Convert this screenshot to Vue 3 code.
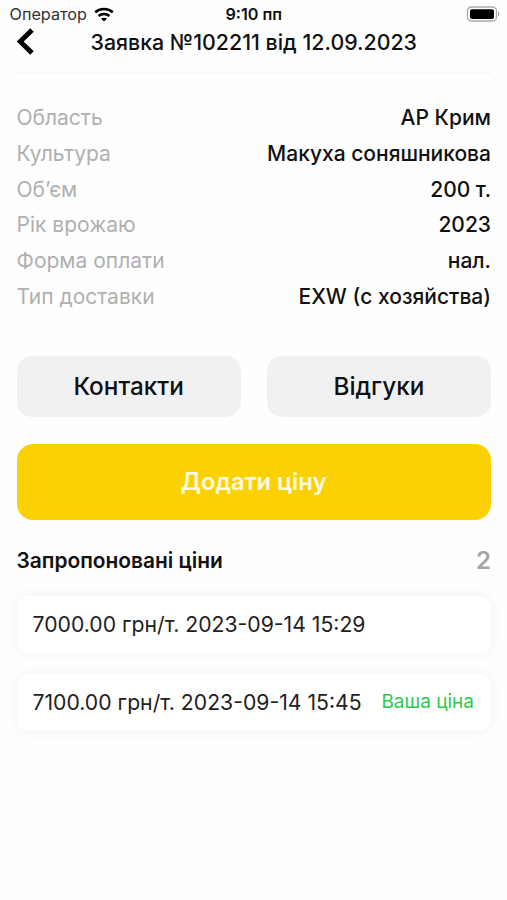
<template>
  <main class="screen">
    <div class="status-bar">
      <div class="carrier">
        <span>Оператор</span>
        <svg class="wifi" viewBox="0 0 20 15" aria-hidden="true">
          <path d="M1.2 5.2C6 .9 14 .9 18.8 5.2" />
          <path d="M4.6 8.9c3-2.6 7.8-2.6 10.8 0" />
          <path class="wifi-dot" d="M10 14.5 7 11.7c1.7-1.4 4.3-1.4 6 0z" />
        </svg>
      </div>
      <span class="time">9:10 пп</span>
      <svg class="battery" viewBox="0 0 34 16" aria-hidden="true">
        <rect class="battery-case" x="1.5" y="1" width="29" height="14" rx="4" />
        <rect x="4" y="3.2" width="24" height="9.8" rx="2" />
        <path class="battery-cap" d="M32 5.5c1.8.6 1.8 4.4 0 5z" />
      </svg>
    </div>

    <header class="header">
      <button class="back" type="button" aria-label="Назад">
        <svg viewBox="0 0 18 27" aria-hidden="true">
          <path d="M15 2 3.2 13.5 15 25" />
        </svg>
      </button>
      <h1>Заявка №102211 від 12.09.2023</h1>
    </header>

    <dl class="details">
      <div v-for="item in details" :key="item.label" class="detail-row">
        <dt>{{ item.label }}</dt>
        <dd>{{ item.value }}</dd>
      </div>
    </dl>

    <div class="actions">
      <button type="button">Контакти</button>
      <button type="button">Відгуки</button>
    </div>
    <button class="add-price" type="button">Додати ціну</button>

    <section>
      <div class="prices-head">
        <h2>Запропоновані ціни</h2>
        <span class="count">{{ prices.length }}</span>
      </div>
      <ul class="prices">
        <li v-for="price in prices" :key="price.date" class="price-card">
          <span>{{ price.amount }} грн/т. {{ price.date }}</span>
          <span v-if="price.own" class="own">Ваша ціна</span>
        </li>
      </ul>
    </section>
  </main>
</template>

<script setup>
const details = [
  { label: 'Область', value: 'АР Крим' },
  { label: 'Культура', value: 'Макуха соняшникова' },
  { label: 'Об’єм', value: '200 т.' },
  { label: 'Рік врожаю', value: '2023' },
  { label: 'Форма оплати', value: 'нал.' },
  { label: 'Тип доставки', value: 'EXW (с хозяйства)' }
]

const prices = [
  { amount: '7000.00', date: '2023-09-14 15:29', own: false },
  { amount: '7100.00', date: '2023-09-14 15:45', own: true }
]
</script>

<style>
body {
  background: #fefefe;
}
</style>

<style scoped>
.screen {
  box-sizing: border-box;
  min-height: 900px;
  padding: 0 16px 0 16.5px;
  background: #fefefe;
  color: #111;
  font-family: Inter, sans-serif;
  white-space: nowrap;
}

button {
  padding: 0;
  border: 0;
  color: inherit;
  font-family: inherit;
}

h1,
h2,
dl,
dd,
ul {
  margin: 0;
  padding: 0;
}

.status-bar {
  display: grid;
  grid-template-columns: 1fr auto 1fr;
  align-items: center;
  height: 28px;
  margin: 0 -8px 0 -7px;
  font-size: 16.2px;
}

.carrier {
  display: flex;
  align-items: center;
  gap: 7px;
  color: #333;
}

.wifi {
  width: 20px;
  height: 15px;
  fill: none;
  stroke: #000;
  stroke-width: 2.6;
}

.wifi-dot {
  fill: #000;
  stroke: none;
}

.time {
  margin-right: 1px;
  font-weight: 600;
}

.battery {
  justify-self: end;
  width: 34px;
  height: 16px;
  margin-right: -1px;
}

.battery-case {
  fill: none;
  stroke: #aaa;
  stroke-width: 1.3;
}

.battery-cap {
  fill: #aaa;
}

.header {
  display: grid;
  grid-template-columns: 18px 1fr 18px;
  align-items: center;
  height: 46px;
  padding-bottom: 19px;
  box-sizing: border-box;
  border-bottom: 2px solid #f8f8f8;
}

.back {
  height: 27px;
  background: none;
}

.back svg {
  display: block;
  width: 18px;
  height: 27px;
  fill: none;
  stroke: #000;
  stroke-width: 5;
}

h1 {
  font-size: 21.35px;
  font-weight: 500;
  line-height: 26px;
  text-align: center;
}

.details {
  margin-top: 26px;
}

.detail-row {
  display: flex;
  justify-content: space-between;
  height: 35.75px;
  font-size: 21px;
  line-height: 35.75px;
}

dt {
  color: #b0b0b0;
}

dd {
  font-weight: 500;
}

.actions {
  display: grid;
  grid-template-columns: 1fr 1fr;
  gap: 26px;
  margin-top: 41.5px;
}

.actions button {
  height: 61px;
  padding-bottom: 1px;
  border-radius: 15px;
  background: #f1f1f1;
  font-size: 24.3px;
  font-weight: 500;
}

.add-price {
  display: block;
  width: 100%;
  height: 76px;
  margin-top: 26.5px;
  border-radius: 16px;
  background: #fbd103;
  color: #fffbe0;
  font-size: 23.7px;
  font-weight: 600;
}

.prices-head {
  display: flex;
  align-items: center;
  justify-content: space-between;
  height: 28px;
  margin-top: 27px;
}

h2 {
  font-size: 20.9px;
  font-weight: 600;
}

.count {
  color: #a5a5a5;
  font-size: 24px;
  font-weight: 600;
}

.prices {
  display: grid;
  gap: 21px;
  margin-top: 21px;
  list-style: none;
}

.price-card {
  display: flex;
  align-items: center;
  justify-content: space-between;
  height: 57px;
  padding: 0 17px 0 16px;
  border-radius: 12px;
  background: #fff;
  box-shadow: 0 0 13px rgba(0, 0, 0, 0.055);
  color: #222;
  font-size: 21.2px;
  line-height: 26px;
}

.own {
  color: #2fc94a;
  font-size: 19px;
}
</style>
